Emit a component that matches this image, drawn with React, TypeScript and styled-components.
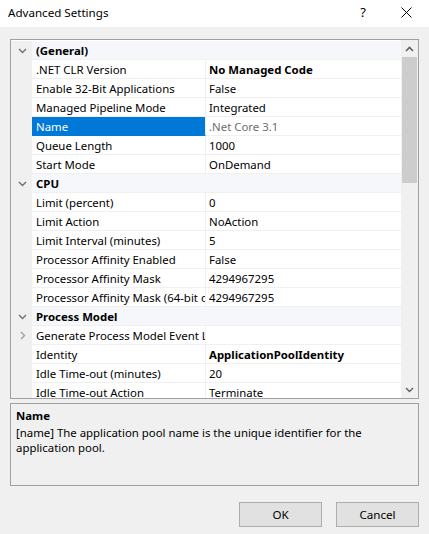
import React from 'react';
import styled, { createGlobalStyle } from 'styled-components';

const GlobalStyle = createGlobalStyle`
  html, body {
    margin: 0;
    padding: 0;
    background: #f0f0f0;
  }
  body {
    font-family: "Noto Sans", "Open Sans", sans-serif;
    font-size: 11.4px;
    color: #000;
  }
`;

const Window = styled.div`
  width: 429px;
  height: 534px;
  display: flex;
  flex-direction: column;
  background: #f0f0f0;
  overflow: hidden;
`;

const TitleBar = styled.div`
  height: 27px;
  box-sizing: border-box;
  padding: 0 0 3px 8px;
  background: #fff;
  display: flex;
  align-items: center;
`;

const Title = styled.div`
  flex: 1;
  font-size: 11.6px;
`;

const TitleButton = styled.div`
  width: 46px;
  height: 24px;
  display: flex;
  align-items: center;
  justify-content: center;
  font-size: 13px;
`;

const HelpButton = styled(TitleButton)`
  padding-left: 6px;
  box-sizing: border-box;
`;

const Content = styled.div`
  display: flex;
  flex-direction: column;
  padding: 12px 10px 0 10px;
`;

const Grid = styled.div`
  height: 358px;
  border: 1px solid #a0a0a0;
  background: #fff;
  display: flex;
`;

const List = styled.div`
  flex: 1;
  overflow: hidden;
  padding-top: 1px;
`;

const Row = styled.div`
  display: grid;
  grid-template-columns: 21px 174px 1fr;
  height: 19px;
`;

const Gutter = styled.div`
  background: #f0f0f0;
  display: flex;
  align-items: center;
  justify-content: center;
  padding-left: 2px;
`;

const CategoryCell = styled.div`
  grid-column: 2 / 4;
  background: #f5f7fb;
  font-weight: bold;
  display: flex;
  align-items: center;
  padding-left: 4px;
  border-bottom: 1px solid #f0f0f0;
`;

const NameCell = styled.div<{ $selected?: boolean }>`
  background: ${(p) => (p.$selected ? '#0078d7' : '#fff')};
  color: ${(p) => (p.$selected ? '#fff' : '#000')};
  display: flex;
  align-items: center;
  padding-left: 4px;
  white-space: nowrap;
  overflow: hidden;
  border-bottom: 1px solid ${(p) => (p.$selected ? '#0078d7' : '#f0f0f0')};
  border-right: 1px solid #f0f0f0;
`;

const ValueCell = styled.div<{ $bold?: boolean; $muted?: boolean }>`
  display: flex;
  align-items: center;
  padding-left: 3px;
  white-space: nowrap;
  overflow: hidden;
  font-weight: ${(p) => (p.$bold ? 'bold' : 'normal')};
  color: ${(p) => (p.$muted ? '#6d6d6d' : '#000')};
  border-bottom: 1px solid #f0f0f0;
`;

const Scrollbar = styled.div`
  width: 17px;
  background: #f0f0f0;
  display: flex;
  flex-direction: column;
`;

const ScrollArrow = styled.div`
  height: 17px;
  display: flex;
  align-items: center;
  justify-content: center;
`;

const Thumb = styled.div`
  height: 126px;
  margin: 0 1px;
  background: #cdcdcd;
`;

const Track = styled.div`
  flex: 1;
`;

const Description = styled.div`
  margin-top: 4px;
  height: 69px;
  border: 1px solid #a0a0a0;
  background: #f0f0f0;
  padding: 4px 5px 8px 5px;
  line-height: 15px;
`;

const DescTitle = styled.div`
  font-weight: bold;
  margin-bottom: 2px;
`;

const DescText = styled.div`
  padding-right: 40px;
`;

const ButtonBar = styled.div`
  display: flex;
  justify-content: flex-end;
  gap: 14px;
  margin-top: 16px;
`;

const Button = styled.button`
  width: 83px;
  height: 25px;
  background: #e1e1e1;
  border: 1px solid #adadad;
  font-family: inherit;
  font-size: 11.6px;
  color: #000;
  padding: 0;
`;

const ChevronDown = ({ color = '#707070' }: { color?: string }) => (
  <svg width="9" height="6" viewBox="0 0 9 6">
    <polyline points="1,1 4.5,4.5 8,1" fill="none" stroke={color} strokeWidth="1.4" />
  </svg>
);

const ChevronRight = () => (
  <svg width="6" height="9" viewBox="0 0 6 9">
    <polyline points="1,1 4.5,4.5 1,8" fill="none" stroke="#a0a0a0" strokeWidth="1.4" />
  </svg>
);

const ChevronUp = () => (
  <svg width="9" height="6" viewBox="0 0 9 6">
    <polyline points="1,5 4.5,1.5 8,5" fill="none" stroke="#606060" strokeWidth="1.6" />
  </svg>
);

const CloseIcon = () => (
  <svg width="11" height="11" viewBox="0 0 11 11">
    <line x1="0.5" y1="0.5" x2="10.5" y2="10.5" stroke="#000" strokeWidth="1" />
    <line x1="10.5" y1="0.5" x2="0.5" y2="10.5" stroke="#000" strokeWidth="1" />
  </svg>
);

type Item = { name: string; value: string; bold?: boolean; selected?: boolean; expandable?: boolean };
type Category = { title: string; items: Item[] };

const categories: Category[] = [
  {
    title: '(General)',
    items: [
      { name: '.NET CLR Version', value: 'No Managed Code', bold: true },
      { name: 'Enable 32-Bit Applications', value: 'False' },
      { name: 'Managed Pipeline Mode', value: 'Integrated' },
      { name: 'Name', value: '.Net Core 3.1', selected: true },
      { name: 'Queue Length', value: '1000' },
      { name: 'Start Mode', value: 'OnDemand' },
    ],
  },
  {
    title: 'CPU',
    items: [
      { name: 'Limit (percent)', value: '0' },
      { name: 'Limit Action', value: 'NoAction' },
      { name: 'Limit Interval (minutes)', value: '5' },
      { name: 'Processor Affinity Enabled', value: 'False' },
      { name: 'Processor Affinity Mask', value: '4294967295' },
      { name: 'Processor Affinity Mask (64-bit option)', value: '4294967295' },
    ],
  },
  {
    title: 'Process Model',
    items: [
      { name: 'Generate Process Model Event Log Entry', value: '', expandable: true },
      { name: 'Identity', value: 'ApplicationPoolIdentity', bold: true },
      { name: 'Idle Time-out (minutes)', value: '20' },
      { name: 'Idle Time-out Action', value: 'Terminate' },
      { name: 'Load User Profile', value: 'True' },
    ],
  },
];

export default function App() {
  return (
    <>
      <GlobalStyle />
      <Window>
        <TitleBar>
          <Title>Advanced Settings</Title>
          <HelpButton>?</HelpButton>
          <TitleButton>
            <CloseIcon />
          </TitleButton>
        </TitleBar>
        <Content>
          <Grid>
            <List>
              {categories.map((cat) => (
                <React.Fragment key={cat.title}>
                  <Row>
                    <Gutter>
                      <ChevronDown />
                    </Gutter>
                    <CategoryCell>{cat.title}</CategoryCell>
                  </Row>
                  {cat.items.map((item) => (
                    <Row key={item.name}>
                      <Gutter>{item.expandable && <ChevronRight />}</Gutter>
                      <NameCell $selected={item.selected}>{item.name}</NameCell>
                      <ValueCell $bold={item.bold} $muted={item.selected}>
                        {item.value}
                      </ValueCell>
                    </Row>
                  ))}
                </React.Fragment>
              ))}
            </List>
            <Scrollbar>
              <ScrollArrow>
                <ChevronUp />
              </ScrollArrow>
              <Thumb />
              <Track />
              <ScrollArrow>
                <ChevronDown color="#606060" />
              </ScrollArrow>
            </Scrollbar>
          </Grid>
          <Description>
            <DescTitle>Name</DescTitle>
            <DescText>
              [name] The application pool name is the unique identifier for the application pool.
            </DescText>
          </Description>
          <ButtonBar>
            <Button>OK</Button>
            <Button>Cancel</Button>
          </ButtonBar>
        </Content>
      </Window>
    </>
  );
}
